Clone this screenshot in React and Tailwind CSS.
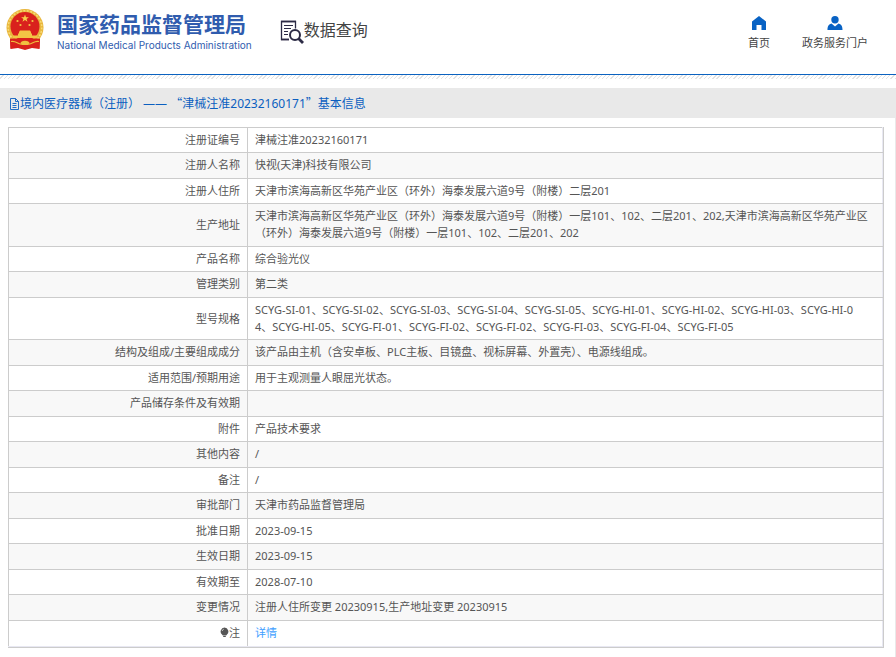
import React from "react";

const rows = [
    { label: "注册证编号", value: "津械注准20232160171" },
    { label: "注册人名称", value: "快视(天津)科技有限公司" },
    { label: "注册人住所", value: "天津市滨海高新区华苑产业区（环外）海泰发展六道9号（附楼）二层201" },
    {
        label: "生产地址",
        value: "天津市滨海高新区华苑产业区（环外）海泰发展六道9号（附楼）一层101、102、二层201、202,天津市滨海高新区华苑产业区（环外）海泰发展六道9号（附楼）一层101、102、二层201、202",
    },
    { label: "产品名称", value: "综合验光仪" },
    { label: "管理类别", value: "第二类" },
    {
        label: "型号规格",
        value: "SCYG-SI-01、SCYG-SI-02、SCYG-SI-03、SCYG-SI-04、SCYG-SI-05、SCYG-HI-01、SCYG-HI-02、SCYG-HI-03、SCYG-HI-0\n4、SCYG-HI-05、SCYG-FI-01、SCYG-FI-02、SCYG-FI-02、SCYG-FI-03、SCYG-FI-04、SCYG-FI-05",
    },
    {
        label: "结构及组成/主要组成成分",
        value: "该产品由主机（含安卓板、PLC主板、目镜盘、视标屏幕、外置壳）、电源线组成。",
    },
    { label: "适用范围/预期用途", value: "用于主观测量人眼屈光状态。" },
    { label: "产品储存条件及有效期", value: "" },
    { label: "附件", value: "产品技术要求" },
    { label: "其他内容", value: "/" },
    { label: "备注", value: "/" },
    { label: "审批部门", value: "天津市药品监督管理局" },
    { label: "批准日期", value: "2023-09-15" },
    { label: "生效日期", value: "2023-09-15" },
    { label: "有效期至", value: "2028-07-10" },
    { label: "变更情况", value: "注册人住所变更 20230915,生产地址变更 20230915" },
];

function Emblem() {
    return (
        <svg viewBox="0 0 38 42" className="w-[38px] h-[42px] shrink-0" aria-hidden="true">
            <path d="M4 27 L4.500 40 L12 39 L19 41 L26 39 L33.500 40 L34 27 Z" fill="#d8201c" />
            <circle cx="19" cy="18.500" r="18.500" fill="#e9b63c" />
            <circle cx="19" cy="18.500" r="16.800" fill="none" stroke="#f7da74" strokeWidth="1.500" strokeDasharray="2 1.500" />
            <circle cx="19" cy="17.500" r="14.500" fill="#d9211d" />
            <path d="M19 5.500l1 2.700h2.900l-2.300 1.700.9 2.800-2.500-1.700-2.500 1.700.9-2.800-2.300-1.700H18z" fill="#f7cf4b" />
            <g fill="#f3c545">
                <circle cx="11.500" cy="12" r="1.100" />
                <circle cx="26.500" cy="12" r="1.100" />
                <circle cx="14.500" cy="16" r="1.100" />
                <circle cx="23.500" cy="16" r="1.100" />
                <path d="M14 21.500h10l1 1.500v1.500H13V23zM12 24.500h14v2h5V29H7v-2.500h5z" />
            </g>
            <path d="M4 30c5-1 10 0 15 2 5-2 10-3 15-2l-.5 9.500L27 38l-8 2-8-2-6.500 1.500z" fill="#d8201c" />
            <path d="M14.500 34c1-3 8-3 9 0l-1.500 2h-6z" fill="#f0c040" />
            <path d="M5 32.500c5-1.500 7 3.500 11 2.500M33 32.500c-5-1.500-7 3.500-11 2.500" fill="none" stroke="#eebc3c" strokeWidth="1.200" />
        </svg>
    );
}

function SearchDocIcon() {
    return (
        <svg viewBox="0 0 24 24" className="w-6 h-6 shrink-0" fill="none" stroke="#2c2b45" aria-hidden="true">
            <path d="M9 19.500H1.500V1.500h14v7" strokeWidth="1.300" />
            <path d="M1 1.500h15M1 19.500h8" strokeWidth="1.600" />
            <path d="M4 5.500h9M4 8.500h7M4 11.500h4M4 14.500h4" strokeWidth="1" />
            <circle cx="15" cy="15" r="5" strokeWidth="2" />
            <path d="M18.500 18.500l4.500 4.500" strokeWidth="2.800" />
        </svg>
    );
}

function HomeIcon() {
    return (
        <svg viewBox="0 0 14 14" className="w-3.5 h-3.5" fill="#0862c4" aria-hidden="true">
            <path d="M7 0l7 5.500V14H9.500V9h-5v5H0V5.500z" />
        </svg>
    );
}

function UserIcon() {
    return (
        <svg viewBox="0 0 16 14" className="w-4 h-3.5" fill="#0862c4" aria-hidden="true">
            <circle cx="8" cy="3.700" r="3.700" />
            <path d="M.5 14c0-3 .5-5.300 4-6.500L8 10.500l3.500-3c3.500 1.200 4 3.500 4 6.500z" />
        </svg>
    );
}

function DocIcon() {
    return (
        <svg viewBox="0 0 11 12" className="w-[11px] h-3 shrink-0" fill="none" stroke="#0b5fc0" aria-hidden="true">
            <path d="M1.500.5h5l3 3v8h-8z M6.500.5v3h3 M3.500 5.500h4 M3.500 7.500h4 M3.500 9.500h4" strokeWidth=".9" />
        </svg>
    );
}

function BulbIcon() {
    return (
        <svg viewBox="0 0 9 11" className="w-[9px] h-[11px]" aria-hidden="true">
            <path d="M4.500.5a4 4 0 0 1 2.500 7l-.8 1H2.800L2 7.500a4 4 0 0 1 2.500-7z" fill="#555" />
            <path d="M3.200 9.500h2.600" stroke="#555" />
            <path d="M2.200 4a2.200 2.200 0 0 1 1.600-1.800" stroke="#ddd" strokeWidth=".8" fill="none" />
        </svg>
    );
}

function Header() {
    return (
        <header>
            <div className="flex items-start justify-between border-b border-[#0b62c0] pl-1.5 pr-7 h-[75px]">
                <div className="flex items-start">
                    <a href="#" className="flex items-start gap-[13px] pt-[9px] text-[#305cae]">
                        <Emblem />
                        <span className="flex flex-col pt-[3px]">
                            <span className="text-[21px] leading-[25px] font-bold">国家药品监督管理局</span>
                            <span className="font-['Inter','Liberation_Sans',sans-serif] text-[10px] leading-4">
                                National Medical Products Administration
                            </span>
                        </span>
                    </a>
                    <div className="flex items-center pl-7 pt-5">
                        <SearchDocIcon />
                        <span className="text-base leading-5 -mt-1 text-[#444]">数据查询</span>
                    </div>
                </div>
                <nav className="flex gap-8 pt-4 text-[11px] leading-4 text-[#444]">
                    <a href="#" className="flex flex-col items-center gap-[5px]">
                        <HomeIcon />
                        首页
                    </a>
                    <a href="#" className="flex flex-col items-center gap-[5px]">
                        <UserIcon />
                        政务服务门户
                    </a>
                </nav>
            </div>
            <div className="h-1 bg-[repeating-linear-gradient(135deg,#fff_0px,#fff_2px,#e3e3e3_2px,#e3e3e3_3px)]" />
        </header>
    );
}

function App() {
    return (
        <div className="min-h-screen flex flex-col bg-white text-[#555] font-['Noto_Sans','Noto_Sans_CJK_SC',sans-serif]">
            <Header />
            <main className="mt-[9px] grow border-r border-[#e9e9e9]">
                <h1 className="flex items-center bg-[#e9e9e9] px-[9px] pt-[5px] pb-1 text-xs leading-5 text-[#0b5fc0]">
                    <DocIcon />
                    <span className="whitespace-pre-wrap">
                        境内医疗器械（注册） —— <span className="font-['Noto_Sans_CJK_SC',sans-serif]">“</span>
                        津械注准20232160171
                        <span className="font-['Noto_Sans_CJK_SC',sans-serif]">”</span>基本信息
                    </span>
                </h1>
                <div className="pl-2 pr-[11px] pt-[9px]">
                    <div className="border-r border-b border-[#ccc]">
                        <table className="w-full border-collapse text-[11px] leading-[17px]">
                            <tbody>
                                {rows.map((row) => (
                                    <tr key={row.label} className="even:bg-[#f8f8f8] even:*:pb-[5px]">
                                        <th scope="row" className="w-[239px] border border-[#ccc] pl-2 pr-[7px] pt-[3px] pb-1 text-right font-normal">
                                            {row.label}
                                        </th>
                                        <td className="h-[25px] border border-[#ccc] border-r-[#e8e8f2] pl-[7px] pr-3 pt-[3px] pb-1 break-all whitespace-pre-line">
                                            {row.value}
                                        </td>
                                    </tr>
                                ))}
                                <tr>
                                    <th scope="row" className="border border-[#ccc] border-b-[#e8e8f2] pl-2 pr-[7px] pt-[3px] pb-[5px] font-normal">
                                        <span className="flex items-center justify-end">
                                            <BulbIcon />注
                                        </span>
                                    </th>
                                    <td className="border border-[#ccc] border-r-[#e8e8f2] border-b-[#e8e8f2] pl-[7px] pr-3 pt-[3px] pb-[5px]">
                                        <a href="#" className="text-[#409eff]">详情</a>
                                    </td>
                                </tr>
                            </tbody>
                        </table>
                    </div>
                </div>
            </main>
        </div>
    );
}

export default App;
